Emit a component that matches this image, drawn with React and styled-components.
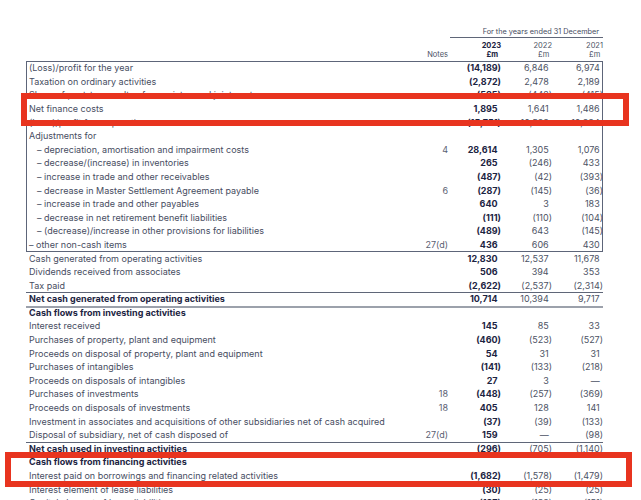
import React from 'react';
import styled, { createGlobalStyle } from 'styled-components';

const Global = createGlobalStyle`
  html, body { margin: 0; padding: 0; background: #fff; }
  body { font-family: Inter, "Noto Sans", sans-serif; }
`;

const Page = styled.div`
  position: relative;
  width: 641px;
  height: 500px;
  overflow: hidden;
  background: #fff;
  padding: 25.5px 38px 0 26px;
  box-sizing: border-box;
  color: #474d5f;
`;

const Caption = styled.div`
  margin-left: auto;
  width: 153px;
  box-sizing: border-box;
  text-align: right;
  font-size: 7.3px;
  line-height: 11px;
  padding-right: 4px;
  border-bottom: 1px solid #5f6678;
`;

const Grid = styled.div`
  display: grid;
  grid-template-columns: 1fr 50px 53px 51px 51px;
  align-items: center;
`;

const HeaderRow = styled(Grid)`
  margin-top: 3.5px;
  margin-bottom: 2.2px;
  align-items: end;
  font-size: 7.5px;
  line-height: 9px;
`;

const HeadCell = styled.div`
  text-align: right;
  font-weight: ${p => (p.$bold ? 700 : 400)};
  color: ${p => (p.$bold ? '#1c2442' : '#4c5264')};
`;

const Frame = styled.div`
  box-shadow: inset 0 0 0 1px #5d6579;
`;

const Row = styled(Grid)`
  height: 13.6px;
  font-size: 9px;
  line-height: 13.6px;
  white-space: nowrap;
  box-shadow: ${p =>
    p.$rule === 'thin'
      ? 'inset 0 1px 0 #5f6678'
      : p.$rule === 'thick'
      ? 'inset 0 2px 0 #9ca1ab'
      : 'none'};
`;

const Label = styled.div`
  padding-left: ${p => (p.$indent ? 11 : 3)}px;
  font-weight: ${p => (p.$bold ? 700 : 400)};
  color: ${p => (p.$bold ? '#1c2442' : '#474d5f')};
  overflow: visible;
`;

const Note = styled.div`
  text-align: right;
  color: #5a6072;
`;

const Value = styled.div`
  text-align: right;
  font-weight: ${p => (p.$bold ? 700 : 400)};
  color: ${p => (p.$bold ? '#1c2442' : '#4c5264')};
`;

const Ghost = styled.span`
  visibility: hidden;
`;

const Highlight = styled.div`
  position: absolute;
  left: ${p => p.$left}px;
  top: ${p => p.$top}px;
  width: ${p => p.$width}px;
  height: ${p => p.$height}px;
  border: 6px solid #e8341f;
  box-sizing: border-box;
  pointer-events: none;
`;

const framed = [
  ['(Loss)/profit for the year', '', '(14,189)', '6,846', '6,974'],
  ['Taxation on ordinary activities', '', '(2,872)', '2,478', '2,189'],
  ['Share of post-tax results of associates and joint ventures', '', '(585)', '(442)', '(415)'],
  ['Net finance costs', '', '1,895', '1,641', '1,486'],
  ['(Loss)/profit from operations', '', '(15,751)', '10,523', '10,234'],
  ['Adjustments for', '', '', '', ''],
  ['– depreciation, amortisation and impairment costs', '4', '28,614', '1,305', '1,076', { indent: true }],
  ['– decrease/(increase) in inventories', '', '265', '(246)', '433', { indent: true }],
  ['– increase in trade and other receivables', '', '(487)', '(42)', '(393)', { indent: true }],
  ['– decrease in Master Settlement Agreement payable', '6', '(287)', '(145)', '(36)', { indent: true }],
  ['– increase in trade and other payables', '', '640', '3', '183', { indent: true }],
  ['– decrease in net retirement benefit liabilities', '', '(111)', '(110)', '(104)', { indent: true }],
  ['– (decrease)/increase in other provisions for liabilities', '', '(489)', '643', '(145)', { indent: true }],
  ['– other non-cash items', '27(d)', '436', '606', '430'],
];

const rest = [
  ['Cash generated from operating activities', '', '12,830', '12,537', '11,678'],
  ['Dividends received from associates', '', '506', '394', '353'],
  ['Tax paid', '', '(2,622)', '(2,537)', '(2,314)'],
  ['Net cash generated from operating activities', '', '10,714', '10,394', '9,717', { bold: true, rule: 'thin' }],
  ['Cash flows from investing activities', '', '', '', '', { bold: true, rule: 'thick' }],
  ['Interest received', '', '145', '85', '33'],
  ['Purchases of property, plant and equipment', '', '(460)', '(523)', '(527)'],
  ['Proceeds on disposal of property, plant and equipment', '', '54', '31', '31'],
  ['Purchases of intangibles', '', '(141)', '(133)', '(218)'],
  ['Proceeds on disposals of intangibles', '', '27', '3', '—'],
  ['Purchases of investments', '18', '(448)', '(257)', '(369)'],
  ['Proceeds on disposals of investments', '18', '405', '128', '141'],
  ['Investment in associates and acquisitions of other subsidiaries net of cash acquired', '', '(37)', '(39)', '(133)'],
  ['Disposal of subsidiary, net of cash disposed of', '27(d)', '159', '—', '(98)'],
  ['Net cash used in investing activities', '', '(296)', '(705)', '(1,140)', { bold: true, rule: 'thin' }],
  ['Cash flows from financing activities', '', '', '', '', { bold: true }],
  ['Interest paid on borrowings and financing related activities', '', '(1,682)', '(1,578)', '(1,479)'],
  ['Interest element of lease liabilities', '', '(30)', '(25)', '(25)'],
  ['Capital element of lease liabilities', '', '(137)', '(132)', '(151)'],
];

function Amount({ v, bold }) {
  return (
    <Value $bold={bold}>
      {v}
      {v && !v.endsWith(')') ? <Ghost>)</Ghost> : null}
    </Value>
  );
}

function Line({ r }) {
  const [label, note, a, b, c, opt = {}] = r;
  return (
    <Row $rule={opt.rule}>
      <Label $indent={opt.indent} $bold={opt.bold}>{label}</Label>
      <Note>{note}</Note>
      <Amount v={a} bold />
      <Amount v={b} />
      <Amount v={c} />
    </Row>
  );
}

export default function App() {
  return (
    <>
      <Global />
      <Page>
        <Caption>For the years ended 31 December</Caption>
        <HeaderRow>
          <div />
          <HeadCell>Notes</HeadCell>
          <HeadCell $bold>2023<br />£m<Ghost>)</Ghost></HeadCell>
          <HeadCell>2022<br />£m<Ghost>)</Ghost></HeadCell>
          <HeadCell>2021<br />£m<Ghost>)</Ghost></HeadCell>
        </HeaderRow>
        <Frame>
          {framed.map((r, i) => <Line key={i} r={r} />)}
        </Frame>
        {rest.map((r, i) => <Line key={i} r={r} />)}
        <Highlight $left={20.5} $top={93.3} $width={608} $height={33.2} />
        <Highlight $left={5} $top={452.3} $width={627} $height={35} />
      </Page>
    </>
  );
}
